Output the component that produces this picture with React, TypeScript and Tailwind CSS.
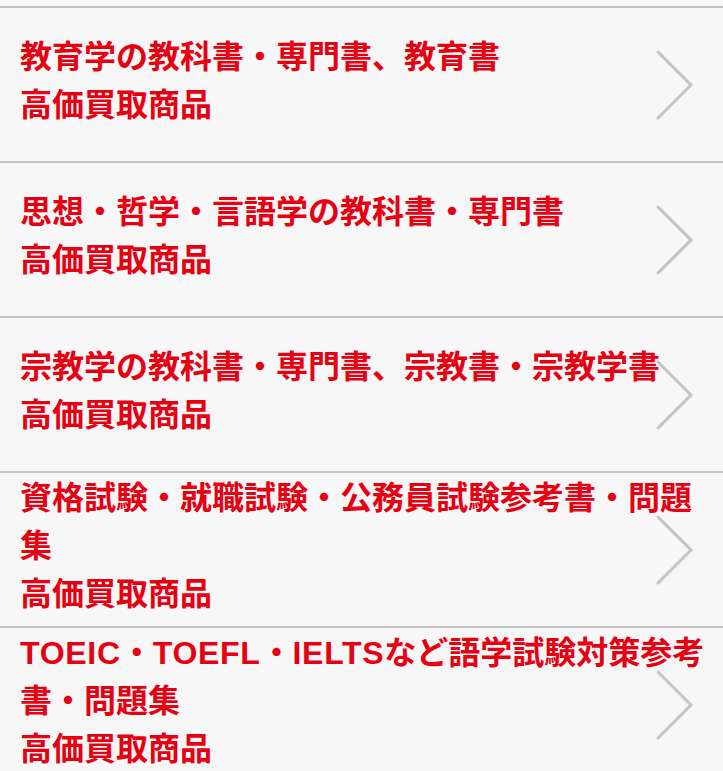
import React from "react";

const items: string[] = [
  "教育学の教科書・専門書、教育書",
  "思想・哲学・言語学の教科書・専門書",
  "宗教学の教科書・専門書、宗教書・宗教学書",
  "資格試験・就職試験・公務員試験参考書・問題集",
  "TOEIC・TOEFL・IELTSなど語学試験対策参考書・問題集",
];

function Label({ text }: { text: string }) {
  const parts = text.split(/([A-Z]+)/);
  return (
    <>
      {parts.map((p, i) =>
        /^[A-Z]+$/.test(p) ? (
          <span key={i} className="tracking-[0.7px]">
            {p}
          </span>
        ) : (
          <React.Fragment key={i}>{p}</React.Fragment>
        )
      )}
    </>
  );
}

function Chevron() {
  return (
    <svg width="40" height="72" viewBox="0 0 40 72" className="block" aria-hidden="true">
      <polyline
        points="3,3 36,36 3,69"
        fill="none"
        stroke="#c4c4c4"
        strokeWidth="3"
        strokeLinecap="round"
        strokeLinejoin="miter"
      />
    </svg>
  );
}

export default function App() {
  return (
    <div className="min-h-screen bg-[#f7f7f7]" style={{ fontFamily: '"Liberation Sans", "Noto Sans CJK JP", sans-serif' }}>
      <div className="h-[6px]" />
      <ul>
        {items.map((t) => (
          <li key={t} className="relative h-[155px] border-t-2 border-[#c4c4c4]">
            <a href="#" className="flex h-full items-center pb-[7px] pl-[20px] pr-[10px]">
              <span className="block text-[32px] leading-[48px] font-bold text-[#e60012]">
                <Label text={t} />
                <br />
                高価買取商品
              </span>
            </a>
            <span className="absolute right-[28px] top-1/2 -translate-y-1/2">
              <Chevron />
            </span>
          </li>
        ))}
      </ul>
    </div>
  );
}
